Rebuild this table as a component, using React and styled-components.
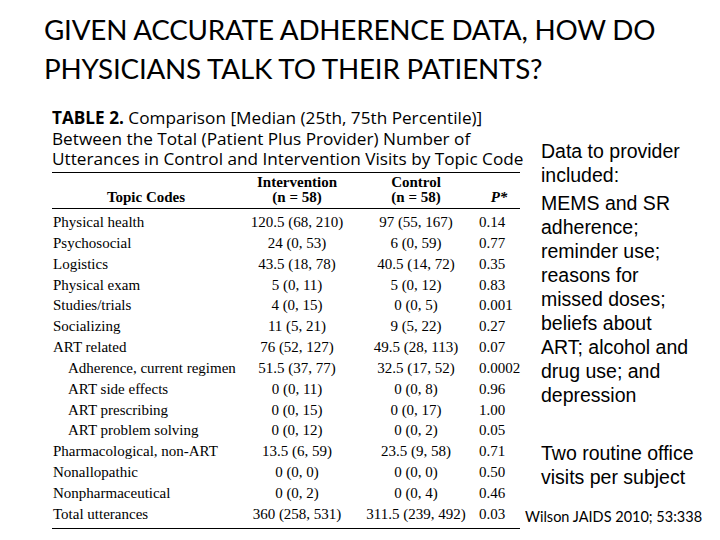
import React from "react";
import styled, { createGlobalStyle } from "styled-components";

const GlobalStyle = createGlobalStyle`
  html, body {
    margin: 0;
    padding: 0;
    background: #fff;
  }
`;

const rows = [
  { topic: "Physical health", iv: "120.5 (68, 210)", ct: "97 (55, 167)", p: "0.14" },
  { topic: "Psychosocial", iv: "24 (0, 53)", ct: "6 (0, 59)", p: "0.77" },
  { topic: "Logistics", iv: "43.5 (18, 78)", ct: "40.5 (14, 72)", p: "0.35" },
  { topic: "Physical exam", iv: "5 (0, 11)", ct: "5 (0, 12)", p: "0.83" },
  { topic: "Studies/trials", iv: "4 (0, 15)", ct: "0 (0, 5)", p: "0.001" },
  { topic: "Socializing", iv: "11 (5, 21)", ct: "9 (5, 22)", p: "0.27" },
  { topic: "ART related", iv: "76 (52, 127)", ct: "49.5 (28, 113)", p: "0.07" },
  { topic: "Adherence, current regimen", iv: "51.5 (37, 77)", ct: "32.5 (17, 52)", p: "0.0002", sub: true },
  { topic: "ART side effects", iv: "0 (0, 11)", ct: "0 (0, 8)", p: "0.96", sub: true },
  { topic: "ART prescribing", iv: "0 (0, 15)", ct: "0 (0, 17)", p: "1.00", sub: true },
  { topic: "ART problem solving", iv: "0 (0, 12)", ct: "0 (0, 2)", p: "0.05", sub: true },
  { topic: "Pharmacological, non-ART", iv: "13.5 (6, 59)", ct: "23.5 (9, 58)", p: "0.71" },
  { topic: "Nonallopathic", iv: "0 (0, 0)", ct: "0 (0, 0)", p: "0.50" },
  { topic: "Nonpharmaceutical", iv: "0 (0, 2)", ct: "0 (0, 4)", p: "0.46" },
  { topic: "Total utterances", iv: "360 (258, 531)", ct: "311.5 (239, 492)", p: "0.03" },
];

const Slide = styled.div`
  width: 720px;
  height: 540px;
  overflow: hidden;
  background: #fff;
  color: #000;
`;

const Title = styled.h1`
  margin: 0;
  padding: 10px 0 0 44px;
  font-family: Lato, "Liberation Sans", sans-serif;
  font-weight: 400;
  font-size: 27.8px;
  line-height: 39px;
  letter-spacing: -0.2px;
`;

const Body = styled.div`
  display: flex;
  align-items: flex-start;
  padding-left: 52px;
  margin-top: 20px;
`;

const TablePanel = styled.div`
  width: 468px;
  flex-shrink: 0;
`;

const Caption = styled.div`
  font-family: "Open Sans", "Noto Sans", sans-serif;
  font-size: 17.2px;
  line-height: 20.5px;
  padding-bottom: 2px;
  border-bottom: 1.5px solid #000;
  white-space: nowrap;

  b {
    font-weight: 700;
  }
`;

const Table = styled.table`
  width: 100%;
  border-collapse: collapse;
  table-layout: fixed;
  font-family: "Liberation Serif", "Times New Roman", serif;
  font-size: 15px;
  border-bottom: 1.5px solid #000;
`;

const HeadRow = styled.tr`
  border-bottom: 1.5px solid #000;
`;

const Th = styled.th`
  font-weight: 700;
  font-style: ${(p) => (p.$italic ? "italic" : "normal")};
  text-align: center;
  vertical-align: bottom;
  line-height: 15px;
  padding: 2px 0 3px;
  white-space: nowrap;
`;

const Td = styled.td`
  height: 20.85px;
  padding: 0;
  line-height: 20.85px;
  white-space: nowrap;
  text-align: ${(p) => p.$align || "center"};
  padding-left: ${(p) => p.$indent || 0}px;
`;

const Spacer = styled.tr`
  height: 4px;
`;

const Notes = styled.div`
  margin-left: 5px;
  padding-top: 31px;
  font-family: "Liberation Sans", Arial, sans-serif;
  font-size: 19.5px;
  line-height: 24px;
`;

const Para = styled.p`
  margin: 0 0 ${(p) => p.$gap || 0}px;
  padding-left: 16px;
`;

const Cite = styled.div`
  margin-top: 19px;
  font-family: Lato, "Liberation Sans", sans-serif;
  font-size: 14.5px;
  line-height: 18px;
  white-space: nowrap;
`;

export default function App() {
  return (
    <Slide>
      <GlobalStyle />
      <Title>
        GIVEN ACCURATE ADHERENCE DATA, HOW DO
        <br />
        PHYSICIANS TALK TO THEIR PATIENTS?
      </Title>
      <Body>
        <TablePanel>
          <Caption>
            <b>TABLE 2.</b> Comparison [Median (25th, 75th Percentile)]
            <br />
            Between the Total (Patient Plus Provider) Number of
            <br />
            Utterances in Control and Intervention Visits by Topic Code
          </Caption>
          <Table>
            <colgroup>
              <col style={{ width: 188 }} />
              <col style={{ width: 114 }} />
              <col style={{ width: 124 }} />
              <col style={{ width: 42 }} />
            </colgroup>
            <thead>
              <HeadRow>
                <Th>Topic Codes</Th>
                <Th>
                  Intervention
                  <br />
                  (n = 58)
                </Th>
                <Th>
                  Control
                  <br />
                  (n = 58)
                </Th>
                <Th $italic>P*</Th>
              </HeadRow>
            </thead>
            <tbody>
              <Spacer />
              {rows.map((r) => (
                <tr key={r.topic}>
                  <Td $align="left" $indent={r.sub ? 16 : 1}>
                    {r.topic}
                  </Td>
                  <Td>{r.iv}</Td>
                  <Td>{r.ct}</Td>
                  <Td $align="left" $indent={1}>
                    {r.p}
                  </Td>
                </tr>
              ))}
              <Spacer />
            </tbody>
          </Table>
        </TablePanel>
        <Notes>
          <Para $gap={4}>
            Data to provider
            <br />
            included:
          </Para>
          <Para $gap={34}>
            MEMS and SR
            <br />
            adherence;
            <br />
            reminder use;
            <br />
            reasons for
            <br />
            missed doses;
            <br />
            beliefs about
            <br />
            ART; alcohol and
            <br />
            drug use; and
            <br />
            depression
          </Para>
          <Para>
            Two routine office
            <br />
            visits per subject
          </Para>
          <Cite>Wilson JAIDS 2010; 53:338</Cite>
        </Notes>
      </Body>
    </Slide>
  );
}
